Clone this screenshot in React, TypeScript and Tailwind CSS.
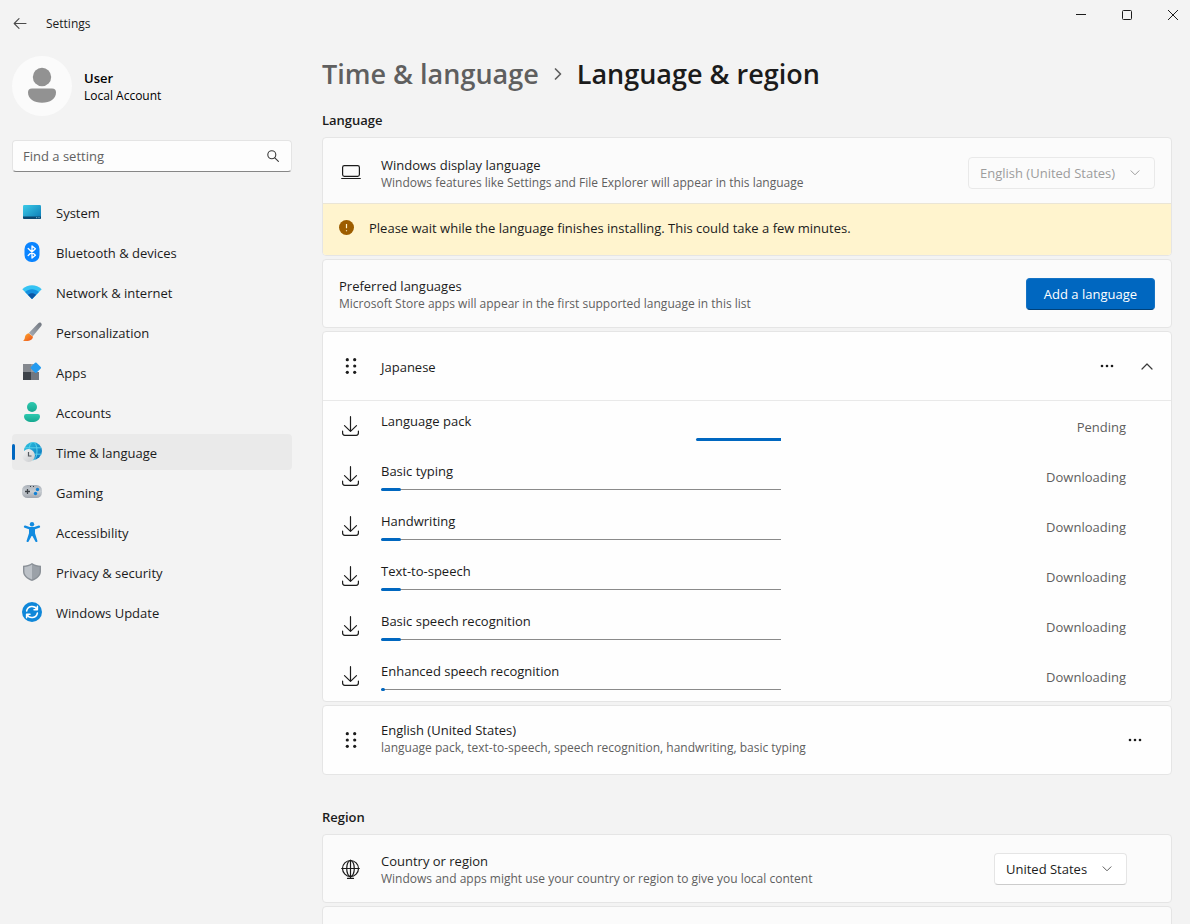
import React from "react";

type IconProps = { className?: string };

const SystemIcon = () => (
  <svg width="20" height="20" viewBox="0 0 20 20" aria-hidden="true">
    <defs>
      <linearGradient id="sys" x1="0" y1="0" x2="1" y2="1">
        <stop offset="0" stopColor="#3ccbe8" />
        <stop offset="1" stopColor="#0a78b4" />
      </linearGradient>
    </defs>
    <rect x="1" y="3" width="18" height="14" rx="1.2" fill="url(#sys)" />
    <path d="M1 14.500h18v1.300a1.200 1.200 0 0 1-1.200 1.200H2.200A1.200 1.200 0 0 1 1 15.800z" fill="#0b4670" />
    <path d="M14.200 15.700h1M16.500 15.700h1" stroke="#9fe0f5" strokeWidth="0.9" />
  </svg>
);

const BluetoothIcon = () => (
  <svg width="20" height="20" viewBox="0 0 20 20" aria-hidden="true">
    <rect x="2.500" y="0" width="15" height="20" rx="7" fill="#0a84ff" />
    <path d="M6.200 6.500l7.200 6.700L10 16V4l3.400 2.800-7.200 6.700" fill="none" stroke="#fff" strokeWidth="1.300" strokeLinejoin="round" strokeLinecap="round" />
  </svg>
);

const NetworkIcon = () => (
  <svg width="20" height="20" viewBox="0 0 20 20" aria-hidden="true">
    <path d="M0.300 7.200C5.500 1.800 14.500 1.800 19.700 7.200L10 17z" fill="#35c3f3" />
    <path d="M3.100 10C7 6.200 13 6.200 16.900 10L10 17z" fill="#1590df" />
    <path d="M5.900 12.800C8.200 10.600 11.800 10.600 14.100 12.800L10.600 16.500q-.6.6-1.200 0z" fill="#0c56a4" />
  </svg>
);

const BrushIcon = () => (
  <svg width="20" height="20" viewBox="0 0 20 20" aria-hidden="true">
    <defs>
      <linearGradient id="brh" x1="1" y1="0" x2="0" y2="1">
        <stop offset="0" stopColor="#70767f" />
        <stop offset="1" stopColor="#a9afb8" />
      </linearGradient>
      <linearGradient id="brt" x1="0" y1="0" x2="1" y2="1">
        <stop offset="0" stopColor="#ffac2e" />
        <stop offset="1" stopColor="#ea4f1b" />
      </linearGradient>
    </defs>
    <path d="M19 1c1 .8.900 2 .200 3L10.800 14.200 6.800 11 16 1.500C17 .5 18.200.300 19 1z" fill="url(#brh)" />
    <path d="M6.600 11.200l4.200 3.300c.6 3.200-3.600 5.300-9.800 4.300 1.700-.9 1.700-2.300 2-4 .4-2 1.900-3.300 3.600-3.600z" fill="url(#brt)" />
  </svg>
);

const AppsIcon = () => (
  <svg width="20" height="20" viewBox="0 0 20 20" aria-hidden="true">
    <rect x="1" y="2" width="8" height="8" fill="#84888e" />
    <rect x="1" y="10" width="8" height="8" fill="#3d4249" />
    <rect x="9" y="10" width="8" height="8" fill="#72777f" />
    <rect x="9" y="2" width="3" height="8" fill="#989ca2" />
    <rect x="9.800" y="1.700" width="8" height="8" rx="1" transform="rotate(45 13.800 5.700)" fill="#249bf0" />
  </svg>
);

const AccountsIcon = () => (
  <svg width="20" height="20" viewBox="0 0 20 20" aria-hidden="true">
    <defs>
      <linearGradient id="acc" x1="0" y1="0" x2="0" y2="1">
        <stop offset="0" stopColor="#2ec9b0" />
        <stop offset="1" stopColor="#16a890" />
      </linearGradient>
    </defs>
    <circle cx="10" cy="5" r="5" fill="url(#acc)" />
    <path d="M4.200 12h11.600A2.200 2.200 0 0 1 18 14.200C18 17.800 14.500 20 10 20s-8-2.200-8-5.800A2.200 2.200 0 0 1 4.200 12z" fill="url(#acc)" />
  </svg>
);

const TimeIcon = () => (
  <svg width="20" height="20" viewBox="0 0 20 20" aria-hidden="true">
    <defs>
      <linearGradient id="glb" x1="0" y1="0" x2="1" y2="1">
        <stop offset="0" stopColor="#2fc5e0" />
        <stop offset="1" stopColor="#0870bd" />
      </linearGradient>
      <linearGradient id="clk" x1="0" y1="0" x2="1" y2="1">
        <stop offset="0" stopColor="#f6f6f6" />
        <stop offset="1" stopColor="#c6c8cb" />
      </linearGradient>
    </defs>
    <circle cx="11" cy="9" r="9" fill="url(#glb)" />
    <g fill="none" stroke="#5fd6ee" strokeWidth="0.900">
      <path d="M3 5.800h16M2.500 12.200h17" />
      <ellipse cx="11" cy="9" rx="4" ry="9" />
    </g>
    <circle cx="6.500" cy="13.500" r="6.400" fill="url(#clk)" />
    <path d="M6.500 10v4h3" fill="none" stroke="#55595f" strokeWidth="1.200" />
  </svg>
);

const GamingIcon = () => (
  <svg width="20" height="20" viewBox="0 0 20 20" aria-hidden="true">
    <defs>
      <linearGradient id="gam" x1="0" y1="0" x2="0" y2="1">
        <stop offset="0" stopColor="#a9b0b8" />
        <stop offset="0.500" stopColor="#c8cdd2" />
        <stop offset="1" stopColor="#a0a6ae" />
      </linearGradient>
    </defs>
    <rect x="0" y="3" width="20" height="13" rx="5.500" fill="url(#gam)" />
    <path d="M5.500 7v5M3 9.500h5" stroke="#3b4046" strokeWidth="1.300" />
    <circle cx="15.500" cy="7.500" r="1.700" fill="#1180d4" />
    <circle cx="13.500" cy="11.500" r="1.700" fill="#1180d4" />
    <path d="M8 4.500h1M11 4.500h1" stroke="#3b4046" />
  </svg>
);

const AccessibilityIcon = () => (
  <svg width="20" height="20" viewBox="0 0 20 20" aria-hidden="true">
    <circle cx="10" cy="2.200" r="2.200" fill="#128be0" />
    <path d="M3 4.700l4.300 1.500h5.400L17 4.700M10 6.500v5" fill="none" stroke="#128be0" strokeWidth="2.300" strokeLinecap="round" strokeLinejoin="round" />
    <path d="M7 5.800h6v5.500l2.300 7.300a1 1 0 0 1-1.900.9L10.400 14h-.8l-3 5.500a1 1 0 0 1-1.900-.9L7 11.300z" fill="#128be0" />
  </svg>
);

const ShieldIcon = () => (
  <svg width="20" height="20" viewBox="0 0 20 20" aria-hidden="true">
    <path d="M10 1c2.700 1.900 5.700 2.600 9 2.800v5.400c0 4.500-3.500 7.800-9 9.800-5.500-2-9-5.300-9-9.800V3.800C4.300 3.600 7.300 2.900 10 1z" fill="#8a9097" />
    <path d="M10 2.500v15C5.500 15.800 2.400 13 2.400 9.200V5C5.300 4.700 7.700 4 10 2.500z" fill="#bcc1c7" />
    <path d="M10 2.500v15c4.500-1.700 7.600-4.500 7.600-8.300V5C14.700 4.700 12.300 4 10 2.500z" fill="#9ba1a8" />
  </svg>
);

const UpdateIcon = () => (
  <svg width="20" height="20" viewBox="0 0 20 20" aria-hidden="true">
    <circle cx="10" cy="10" r="10" fill="#0f87d9" />
    <g fill="none" stroke="#fff" strokeWidth="1.500" strokeLinecap="round" strokeLinejoin="round">
      <path d="M4.600 9A5.600 5.600 0 0 1 15 7.300M15.400 4.300v3.400h-3.400" />
      <path d="M15.400 11A5.600 5.600 0 0 1 5 12.700M4.600 15.700v-3.400h3.400" />
    </g>
  </svg>
);

const Chevron = ({ className }: IconProps) => (
  <svg className={className} width="10" height="6" viewBox="0 0 10 6" fill="none" stroke="currentColor" aria-hidden="true">
    <path d="M1 0.800l4 4 4-4" strokeLinecap="round" strokeLinejoin="round" />
  </svg>
);

const LaptopIcon = () => (
  <svg width="20" height="20" viewBox="0 0 20 20" fill="none" stroke="#1b1b1b" strokeWidth="1.200" strokeLinecap="round" aria-hidden="true">
    <rect x="1.600" y="4.600" width="16.800" height="10.800" rx="1.800" />
    <path d="M0.700 17.500h18.600" />
  </svg>
);

const DownloadIcon = () => (
  <svg width="20" height="20" viewBox="0 0 20 20" fill="none" stroke="#1b1b1b" strokeWidth="1.200" strokeLinecap="round" strokeLinejoin="round" aria-hidden="true">
    <path d="M9.500 0.700v14.500M3.500 9.600l6 5.800 6-5.800" />
    <path d="M1.600 15.200v1.900a2.200 2.200 0 0 0 2.200 2.200h11.400a2.200 2.200 0 0 0 2.200-2.200v-1.900" />
  </svg>
);

const GlobeIcon = () => (
  <svg width="20" height="20" viewBox="0 0 20 20" fill="none" stroke="#1b1b1b" strokeWidth="1.200" strokeLinecap="round" aria-hidden="true">
    <circle cx="9.500" cy="9.500" r="8" />
    <ellipse cx="9.500" cy="9.500" rx="3.800" ry="8" />
    <path d="M0.700 9.500h17.600M9.500 1v18M6.500 19.400h6" />
  </svg>
);

const GripIcon = () => (
  <svg width="20" height="20" viewBox="0 0 20 20" fill="#1b1b1b" aria-hidden="true">
    {[3.7, 10, 16.3].map((y) => (
      <g key={y}>
        <circle cx="6.300" cy={y} r="1.600" />
        <circle cx="13.700" cy={y} r="1.600" />
      </g>
    ))}
  </svg>
);

const MoreButton = ({ label }: { label: string }) => (
  <button type="button" aria-label={label} className="flex size-8 items-center justify-center rounded hover:bg-black/5">
    <svg width="14" height="4" viewBox="0 0 14 4" fill="#1b1b1b" aria-hidden="true">
      <circle cx="2" cy="2" r="1.300" />
      <circle cx="7" cy="2" r="1.300" />
      <circle cx="12" cy="2" r="1.300" />
    </svg>
  </button>
);

const navItems = [
  { label: "System", icon: <SystemIcon /> },
  { label: "Bluetooth & devices", icon: <BluetoothIcon /> },
  { label: "Network & internet", icon: <NetworkIcon /> },
  { label: "Personalization", icon: <BrushIcon /> },
  { label: "Apps", icon: <AppsIcon /> },
  { label: "Accounts", icon: <AccountsIcon /> },
  { label: "Time & language", icon: <TimeIcon />, current: true },
  { label: "Gaming", icon: <GamingIcon /> },
  { label: "Accessibility", icon: <AccessibilityIcon /> },
  { label: "Privacy & security", icon: <ShieldIcon /> },
  { label: "Windows Update", icon: <UpdateIcon /> },
];

const features = [
  { name: "Language pack", status: "Pending", progress: null },
  { name: "Basic typing", status: "Downloading", progress: 5 },
  { name: "Handwriting", status: "Downloading", progress: 5 },
  { name: "Text-to-speech", status: "Downloading", progress: 5 },
  { name: "Basic speech recognition", status: "Downloading", progress: 5 },
  { name: "Enhanced speech recognition", status: "Downloading", progress: 1 },
];

function ProgressBar({ label, value }: { label: string; value: number | null }) {
  return (
    <div role="progressbar" aria-label={label} aria-valuenow={value ?? undefined} className="mt-[7px] grid h-[3px] w-full max-w-[400px] items-center">
      {value === null ? (
        <div className="col-start-1 row-start-1 ml-auto h-[3px] w-[85px] rounded-l-full bg-[#0067c0]" />
      ) : (
        <>
          <div className="col-start-1 row-start-1 h-px bg-[#8a8a8a]" />
          <div className="col-start-1 row-start-1 h-[3px] rounded-full bg-[#0067c0]" style={{ width: `${value}%` }} />
        </>
      )}
    </div>
  );
}

function TwoLine({ title, detail }: { title: string; detail: string }) {
  return (
    <div className="min-w-0 flex-1">
      <div className="text-[13px] leading-5">{title}</div>
      <div className="text-[12px] leading-4 text-[#5f5f5f]">{detail}</div>
    </div>
  );
}

function Dropdown({ label, value, disabled }: { label: string; value: string; disabled?: boolean }) {
  return (
    <div className="relative">
      <select
        aria-label={label}
        disabled={disabled}
        defaultValue={value}
        className="h-8 appearance-none rounded border border-[#e5e5e5] border-b-[#cccccc] bg-white pr-[38px] pl-[11px] text-[13px] leading-5 text-[#1b1b1b] opacity-100 disabled:border-[#e9e9e9] disabled:bg-[#fbfbfb] disabled:text-[#9d9d9d]"
      >
        <option>{value}</option>
      </select>
      <Chevron className={disabled ? "pointer-events-none absolute top-[13px] right-[15px] text-[#9d9d9d]" : "pointer-events-none absolute top-[13px] right-[15px] text-[#5f5f5f]"} />
    </div>
  );
}

export default function App() {
  return (
    <div className="flex h-screen flex-col overflow-hidden bg-[#f3f3f3] font-['Open_Sans','Noto_Sans',sans-serif] text-[#1b1b1b]">
      <header className="flex h-12 shrink-0 items-start justify-between">
        <div className="flex h-12 items-center pl-3">
          <button type="button" aria-label="Back" className="flex size-4 items-center justify-center">
            <svg width="14" height="12" viewBox="0 0 14 12" fill="none" stroke="#4a4a4a" strokeWidth="1.100" strokeLinecap="round" strokeLinejoin="round" aria-hidden="true">
              <path d="M13 5.500H1.500M6 0.700L1.200 5.500 6 10.300" />
            </svg>
          </button>
          <span className="ml-[18px] text-[12px] leading-4">Settings</span>
        </div>
        <div className="flex">
          <button type="button" aria-label="Minimize" className="flex h-[30px] w-[46px] items-center justify-center">
            <svg width="10" height="10" viewBox="0 0 10 10" stroke="#1b1b1b" aria-hidden="true">
              <path d="M0 4.500h10" />
            </svg>
          </button>
          <button type="button" aria-label="Maximize" className="flex h-[30px] w-[46px] items-center justify-center">
            <svg width="10" height="10" viewBox="0 0 10 10" fill="none" stroke="#1b1b1b" aria-hidden="true">
              <rect x="0.500" y="0.500" width="9" height="9" rx="1" />
            </svg>
          </button>
          <button type="button" aria-label="Close" className="flex h-[30px] w-[40px] items-center justify-center pl-[6px]">
            <svg width="10" height="10" viewBox="0 0 10 10" stroke="#1b1b1b" strokeLinecap="round" aria-hidden="true">
              <path d="M0.300 0.300l9.400 9.400M9.700 0.300L0.300 9.700" />
            </svg>
          </button>
        </div>
      </header>

      <div className="flex min-h-0 flex-1">
        <aside className="w-[304px] shrink-0 px-3 pt-2">
          <div className="flex items-center gap-3">
            <svg width="60" height="60" viewBox="0 0 60 60" role="img" aria-label="User avatar">
              <circle cx="30" cy="30" r="30" fill="#fbfbfb" />
              <circle cx="30" cy="21" r="9.200" fill="#929292" />
              <path d="M20 32.500h20a4 4 0 0 1 4 4c0 6.500-6 10.200-14 10.200s-14-3.700-14-10.200a4 4 0 0 1 4-4z" fill="#929292" />
            </svg>
            <div className="text-black">
              <div className="text-[13px] leading-5 font-semibold">User</div>
              <div className="text-[12px] leading-4">Local Account</div>
            </div>
          </div>

          <div className="mt-6 flex h-8 items-center rounded border border-[#e4e4e4] border-b-[#868686] bg-[#fdfdfd] pr-3 pl-[10px]">
            <input type="text" aria-label="Find a setting" placeholder="Find a setting" className="min-w-0 flex-1 bg-transparent text-[13px] leading-5 outline-none placeholder:text-[#616161]" />
            <svg width="12" height="12" viewBox="0 0 12 12" fill="none" stroke="#3a3a3a" strokeWidth="1.100" strokeLinecap="round" aria-hidden="true">
              <circle cx="4.800" cy="4.800" r="4" />
              <path d="M7.800 7.800l3.600 3.600" />
            </svg>
          </div>

          <nav className="mt-[22px] flex flex-col gap-1">
            {navItems.map((item) => (
              <a
                key={item.label}
                href="#"
                aria-current={item.current ? "page" : undefined}
                className={item.current ? "flex h-9 items-center rounded bg-[#eaeaea]" : "flex h-9 items-center rounded"}
              >
                <span className={item.current ? "mr-[7px] h-4 w-[3px] rounded-full bg-[#0067c0]" : "mr-[7px] h-4 w-[3px]"} />
                {item.icon}
                <span className="ml-[14px] pt-0.5 text-[13px] leading-5">{item.label}</span>
              </a>
            ))}
          </nav>
        </aside>

        <main className="min-w-0 flex-1 pt-2 pr-[18px] pl-[18px]">
          <h1 className="flex h-9 items-center text-[27px] leading-9 font-semibold whitespace-nowrap">
            <a href="#" className="text-[#5f5f5f]">Time &amp; language</a>
            <svg className="mx-[14px]" width="10" height="14" viewBox="0 0 10 14" fill="none" stroke="#5f5f5f" strokeWidth="1.700" strokeLinecap="round" strokeLinejoin="round" aria-hidden="true">
              <path d="M2.500 2l5 5-5 5" />
            </svg>
            <span>Language &amp; region</span>
          </h1>

          <section>
            <h2 className="mt-[18px] text-[13px] leading-5 font-semibold">Language</h2>
            <div className="mt-[7px] flex flex-col gap-[3px]">
              <div className="overflow-hidden rounded border border-[#e5e5e5] bg-[#fbfbfb]">
                <div className="flex h-[65px] items-center pr-4 pl-[18px]">
                  <LaptopIcon />
                  <div className="ml-5 flex flex-1 items-center pt-1">
                    <TwoLine title="Windows display language" detail="Windows features like Settings and File Explorer will appear in this language" />
                    <Dropdown label="Windows display language" value="English (United States)" disabled />
                  </div>
                </div>
                <div role="status" className="flex h-[52px] items-center border-t border-[#eae5d6] bg-[#fff4ce] pb-1 pl-4 text-[13px] leading-5">
                  <svg width="15" height="15" viewBox="0 0 15 15" aria-hidden="true">
                    <circle cx="7.500" cy="7.500" r="7.500" fill="#9d5d00" />
                    <path d="M7.500 4v4.300M7.500 10.200v1" stroke="#fff4ce" strokeWidth="1.200" />
                  </svg>
                  <span className="ml-[15px]">Please wait while the language finishes installing. This could take a few minutes.</span>
                </div>
              </div>

              <div className="flex h-[69px] items-center rounded border border-[#e5e5e5] bg-[#fbfbfb] px-4">
                <TwoLine title="Preferred languages" detail="Microsoft Store apps will appear in the first supported language in this list" />
                <button type="button" className="h-8 rounded border border-[#1473c5] border-b-[#00417a] bg-[#0067c0] px-[17px] text-[13px] leading-5 text-white">
                  Add a language
                </button>
              </div>

              <div className="rounded border border-[#e5e5e5] bg-[#fefefe]">
                <div className="flex h-[69px] items-center border-b border-[#e9e9e9] pr-2 pl-[18px]">
                  <GripIcon />
                  <span className="ml-5 flex-1 pt-0.5 text-[13px] leading-5">Japanese</span>
                  <MoreButton label="Japanese options" />
                  <button type="button" aria-label="Collapse Japanese" aria-expanded="true" className="ml-2 flex size-8 items-center justify-center">
                    <svg width="12" height="7" viewBox="0 0 12 7" fill="none" stroke="#3a3a3a" strokeWidth="1.200" strokeLinecap="round" strokeLinejoin="round" aria-hidden="true">
                      <path d="M1 6l5-5 5 5" />
                    </svg>
                  </button>
                </div>
                <ul>
                  {features.map((feature) => (
                    <li key={feature.name} className="flex h-[50px] items-center pr-[45px] pl-[18px]">
                      <DownloadIcon />
                      <div className="ml-5 flex-1">
                        <div className="text-[13px] leading-5">{feature.name}</div>
                        <ProgressBar label={feature.name} value={feature.progress} />
                      </div>
                      <span className="pt-0.5 text-[13px] leading-5 text-[#5f5f5f]">{feature.status}</span>
                    </li>
                  ))}
                </ul>
              </div>

              <div className="flex h-[70px] items-center rounded border border-[#e5e5e5] bg-[#fefefe] pr-5 pl-[18px]">
                <GripIcon />
                <div className="ml-5 flex flex-1 pb-1">
                  <TwoLine title="English (United States)" detail="language pack, text-to-speech, speech recognition, handwriting, basic typing" />
                </div>
                <MoreButton label="English (United States) options" />
              </div>
            </div>
          </section>

          <section>
            <h2 className="mt-8 text-[13px] leading-5 font-semibold">Region</h2>
            <div className="mt-[7px] flex flex-col gap-[3px]">
              <div className="flex h-[69px] items-center rounded border border-[#e5e5e5] bg-[#fbfbfb] pr-11 pl-[18px]">
                <GlobeIcon />
                <div className="ml-5 flex flex-1 items-center">
                  <TwoLine title="Country or region" detail="Windows and apps might use your country or region to give you local content" />
                  <Dropdown label="Country or region" value="United States" />
                </div>
              </div>
              <div className="h-[69px] rounded border border-[#e5e5e5] bg-[#fbfbfb]" />
            </div>
          </section>
        </main>
      </div>
    </div>
  );
}
